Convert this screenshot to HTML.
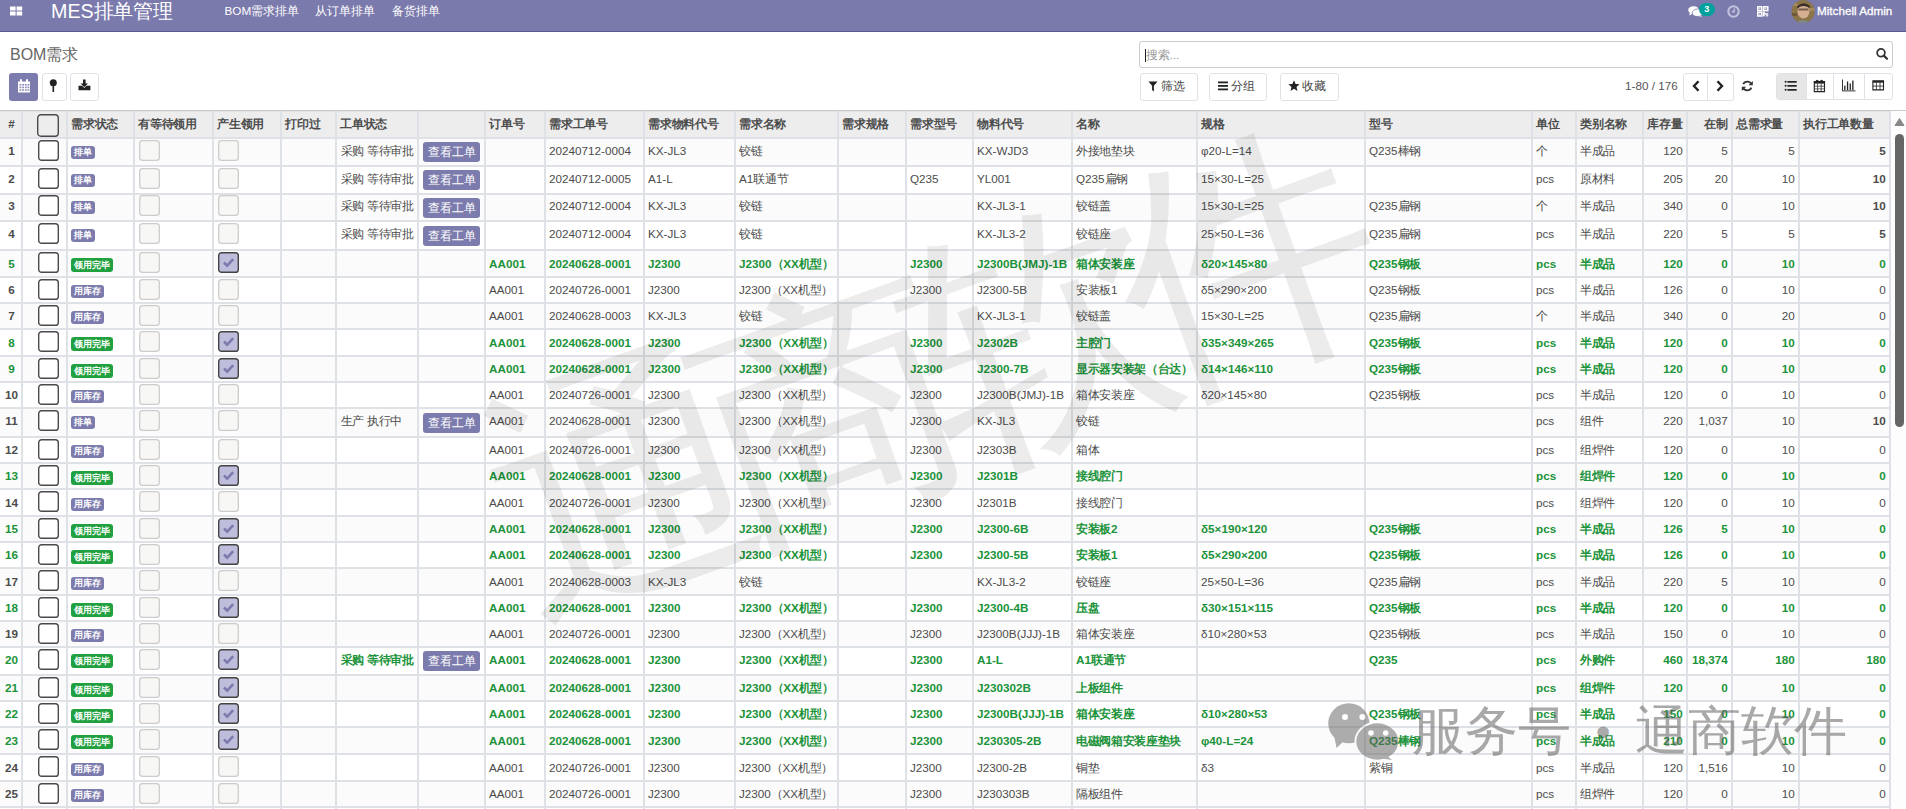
<!DOCTYPE html><html><head><meta charset="utf-8"><style>
*{box-sizing:border-box;margin:0;padding:0}
html,body{width:1906px;height:809px;overflow:hidden;background:#fff}
body{font-family:"Liberation Sans",sans-serif;color:#4c4c4c;position:relative}
.a{position:absolute}
.c{letter-spacing:-0.33px}
.nav{left:0;top:0;width:1906px;height:32px;background:#7b7aac;border-bottom:1px solid #5b5894}
.t{position:absolute;white-space:nowrap;font-size:11.7px;line-height:14px}
.hd{font-weight:bold;color:#4c4c4c}
.g{color:#1b933a;font-weight:bold}
.bd{font-weight:bold}
.vs{position:absolute;width:2px;background:#dee2e6}
.hs{position:absolute;height:2px;background:#dee2e6;left:0;width:1891px}
.cb{position:absolute;width:21px;height:21px}
.badge{position:absolute;height:13px;border-radius:3px;color:#fff;font-size:9px;line-height:13px;padding:0 3.2px;white-space:nowrap;font-weight:bold}
.btnv{position:absolute;height:20px;width:57px;border-radius:3px;background:#7c7bad;color:#fff;font-size:12px;line-height:20px;text-align:center;white-space:nowrap}
.obtn{position:absolute;border:1px solid #dee2e6;border-radius:3px;background:#fff}
</style></head><body>

<div class="a nav"></div>
<div class="a" style="left:0;top:110px;width:1906px;height:1px;background:#c9c9c9"></div>
<div class="a" style="left:0;top:111px;width:1889px;height:26px;background:#ededed"></div>
<div class="a" style="left:0;top:111px;width:1889px;height:1px;background:#e0e2e6"></div>
<div class="a" style="left:0;top:139px;width:1889px;height:26px;background:#fbfbfb"></div>
<div class="a" style="left:0;top:167px;width:1889px;height:26px;background:#fff"></div>
<div class="a" style="left:0;top:195px;width:1889px;height:25px;background:#fbfbfb"></div>
<div class="a" style="left:0;top:222px;width:1889px;height:27px;background:#fff"></div>
<div class="a" style="left:0;top:251px;width:1889px;height:25px;background:#fbfbfb"></div>
<div class="a" style="left:0;top:278px;width:1889px;height:24px;background:#fff"></div>
<div class="a" style="left:0;top:304px;width:1889px;height:24px;background:#fbfbfb"></div>
<div class="a" style="left:0;top:330px;width:1889px;height:25px;background:#fff"></div>
<div class="a" style="left:0;top:357px;width:1889px;height:24px;background:#fbfbfb"></div>
<div class="a" style="left:0;top:383px;width:1889px;height:24px;background:#fff"></div>
<div class="a" style="left:0;top:409px;width:1889px;height:27px;background:#fbfbfb"></div>
<div class="a" style="left:0;top:438px;width:1889px;height:24px;background:#fff"></div>
<div class="a" style="left:0;top:464px;width:1889px;height:24px;background:#fbfbfb"></div>
<div class="a" style="left:0;top:490px;width:1889px;height:25px;background:#fff"></div>
<div class="a" style="left:0;top:517px;width:1889px;height:24px;background:#fbfbfb"></div>
<div class="a" style="left:0;top:543px;width:1889px;height:24px;background:#fff"></div>
<div class="a" style="left:0;top:569px;width:1889px;height:25px;background:#fbfbfb"></div>
<div class="a" style="left:0;top:596px;width:1889px;height:24px;background:#fff"></div>
<div class="a" style="left:0;top:622px;width:1889px;height:24px;background:#fbfbfb"></div>
<div class="a" style="left:0;top:648px;width:1889px;height:26px;background:#fff"></div>
<div class="a" style="left:0;top:676px;width:1889px;height:24px;background:#fbfbfb"></div>
<div class="a" style="left:0;top:702px;width:1889px;height:24px;background:#fff"></div>
<div class="a" style="left:0;top:728px;width:1889px;height:25px;background:#fbfbfb"></div>
<div class="a" style="left:0;top:755px;width:1889px;height:25px;background:#fff"></div>
<div class="a" style="left:0;top:782px;width:1889px;height:24px;background:#fbfbfb"></div>
<div class="hs" style="top:137px"></div>
<div class="hs" style="top:165px"></div>
<div class="hs" style="top:193px"></div>
<div class="hs" style="top:220px"></div>
<div class="hs" style="top:249px"></div>
<div class="hs" style="top:276px"></div>
<div class="hs" style="top:302px"></div>
<div class="hs" style="top:328px"></div>
<div class="hs" style="top:355px"></div>
<div class="hs" style="top:381px"></div>
<div class="hs" style="top:407px"></div>
<div class="hs" style="top:436px"></div>
<div class="hs" style="top:462px"></div>
<div class="hs" style="top:488px"></div>
<div class="hs" style="top:515px"></div>
<div class="hs" style="top:541px"></div>
<div class="hs" style="top:567px"></div>
<div class="hs" style="top:594px"></div>
<div class="hs" style="top:620px"></div>
<div class="hs" style="top:646px"></div>
<div class="hs" style="top:674px"></div>
<div class="hs" style="top:700px"></div>
<div class="hs" style="top:726px"></div>
<div class="hs" style="top:753px"></div>
<div class="hs" style="top:780px"></div>
<div class="hs" style="top:806px"></div>
<div class="vs" style="left:21px;top:111px;height:698px"></div>
<div class="vs" style="left:66px;top:111px;height:698px"></div>
<div class="vs" style="left:133px;top:111px;height:698px"></div>
<div class="vs" style="left:212px;top:111px;height:698px"></div>
<div class="vs" style="left:280px;top:111px;height:698px"></div>
<div class="vs" style="left:335px;top:111px;height:698px"></div>
<div class="vs" style="left:417px;top:111px;height:698px"></div>
<div class="vs" style="left:484px;top:111px;height:698px"></div>
<div class="vs" style="left:544px;top:111px;height:698px"></div>
<div class="vs" style="left:643px;top:111px;height:698px"></div>
<div class="vs" style="left:734px;top:111px;height:698px"></div>
<div class="vs" style="left:837px;top:111px;height:698px"></div>
<div class="vs" style="left:905px;top:111px;height:698px"></div>
<div class="vs" style="left:972px;top:111px;height:698px"></div>
<div class="vs" style="left:1071px;top:111px;height:698px"></div>
<div class="vs" style="left:1196px;top:111px;height:698px"></div>
<div class="vs" style="left:1364px;top:111px;height:698px"></div>
<div class="vs" style="left:1531px;top:111px;height:698px"></div>
<div class="vs" style="left:1575px;top:111px;height:698px"></div>
<div class="vs" style="left:1642px;top:111px;height:698px"></div>
<div class="vs" style="left:1686px;top:111px;height:698px"></div>
<div class="vs" style="left:1731px;top:111px;height:698px"></div>
<div class="vs" style="left:1798px;top:111px;height:698px"></div>
<div class="vs" style="left:1889px;top:111px;height:698px"></div>
<div class="t hd" style="left:0;width:23px;text-align:center;top:116.94px">#</div>
<div class="t hd" style="left:71.3px;top:116.94px"><span class="c">需求状态</span></div>
<div class="t hd" style="left:138.3px;top:116.94px"><span class="c">有等待领用</span></div>
<div class="t hd" style="left:217.3px;top:116.94px"><span class="c">产生领用</span></div>
<div class="t hd" style="left:285.3px;top:116.94px"><span class="c">打印过</span></div>
<div class="t hd" style="left:340.3px;top:116.94px"><span class="c">工单状态</span></div>
<div class="t hd" style="left:489.3px;top:116.94px"><span class="c">订单号</span></div>
<div class="t hd" style="left:549.3px;top:116.94px"><span class="c">需求工单号</span></div>
<div class="t hd" style="left:648.3px;top:116.94px"><span class="c">需求物料代号</span></div>
<div class="t hd" style="left:739.3px;top:116.94px"><span class="c">需求名称</span></div>
<div class="t hd" style="left:842.3px;top:116.94px"><span class="c">需求规格</span></div>
<div class="t hd" style="left:910.3px;top:116.94px"><span class="c">需求型号</span></div>
<div class="t hd" style="left:977.3px;top:116.94px"><span class="c">物料代号</span></div>
<div class="t hd" style="left:1076.3px;top:116.94px"><span class="c">名称</span></div>
<div class="t hd" style="left:1201.3px;top:116.94px"><span class="c">规格</span></div>
<div class="t hd" style="left:1369.3px;top:116.94px"><span class="c">型号</span></div>
<div class="t hd" style="left:1536.3px;top:116.94px"><span class="c">单位</span></div>
<div class="t hd" style="left:1580.3px;top:116.94px"><span class="c">类别名称</span></div>
<div class="t hd" style="left:1647.3px;top:116.94px"><span class="c">库存量</span></div>
<div class="t hd" style="right:178.5px;top:116.94px"><span class="c">在制</span></div>
<div class="t hd" style="left:1736.3px;top:116.94px"><span class="c">总需求量</span></div>
<div class="t hd" style="left:1803.3px;top:116.94px"><span class="c">执行工单数量</span></div>
<svg class="a" style="left:37px;top:113.5px" width="22" height="23" viewBox="0 0 22 23"><rect x="0.7" y="0.7" width="20.6" height="21.6" rx="3.2" fill="#ededed" stroke="#4a4a4a" stroke-width="1.4"/></svg>
<div class="t bd" style="left:0;width:23px;text-align:center;top:143.84px;">1</div>
<svg class="cb" style="left:38px;top:139.50px" width="21" height="21" viewBox="0 0 21 21"><rect x="0.7" y="0.7" width="19.6" height="19.6" rx="2.9" fill="#fff" stroke="#4a4a4a" stroke-width="1.4"/></svg>
<div class="badge" style="left:71px;top:145.90px;height:13px;line-height:13px;background:#7c7bad">排单</div>
<svg class="cb" style="left:139px;top:139.50px" width="21" height="21" viewBox="0 0 21 21"><rect x="0.7" y="0.7" width="19.6" height="19.6" rx="2.9" fill="#f7f7f5" stroke="#cccccc" stroke-width="1.3"/></svg>
<svg class="cb" style="left:218px;top:139.50px" width="21" height="21" viewBox="0 0 21 21"><rect x="0.7" y="0.7" width="19.6" height="19.6" rx="2.9" fill="#f7f7f5" stroke="#cccccc" stroke-width="1.3"/></svg>
<div class="t" style="left:340.5px;top:143.84px"><span class="c">采购</span> <span class="c">等待审批</span></div>
<div class="btnv" style="left:423px;top:142.00px">查看工单</div>
<div class="t" style="left:549px;top:143.84px">20240712-0004</div>
<div class="t" style="left:648px;top:143.84px">KX-JL3</div>
<div class="t" style="left:739px;top:143.84px"><span class="c">铰链</span></div>
<div class="t" style="left:977px;top:143.84px">KX-WJD3</div>
<div class="t" style="left:1076px;top:143.84px"><span class="c">外接地垫块</span></div>
<div class="t" style="left:1201px;top:143.84px">φ20-L=14</div>
<div class="t" style="left:1369px;top:143.84px">Q235<span class="c">棒钢</span></div>
<div class="t" style="left:1536px;top:143.84px"><span class="c">个</span></div>
<div class="t" style="left:1580px;top:143.84px"><span class="c">半成品</span></div>
<div class="t" style="right:223.2px;top:143.84px">120</div>
<div class="t" style="right:178.2px;top:143.84px">5</div>
<div class="t" style="right:111.2px;top:143.84px">5</div>
<div class="t bd" style="right:20.2px;top:143.84px">5</div>
<div class="t bd" style="left:0;width:23px;text-align:center;top:171.84px;">2</div>
<svg class="cb" style="left:38px;top:167.50px" width="21" height="21" viewBox="0 0 21 21"><rect x="0.7" y="0.7" width="19.6" height="19.6" rx="2.9" fill="#fff" stroke="#4a4a4a" stroke-width="1.4"/></svg>
<div class="badge" style="left:71px;top:173.90px;height:13px;line-height:13px;background:#7c7bad">排单</div>
<svg class="cb" style="left:139px;top:167.50px" width="21" height="21" viewBox="0 0 21 21"><rect x="0.7" y="0.7" width="19.6" height="19.6" rx="2.9" fill="#f7f7f5" stroke="#cccccc" stroke-width="1.3"/></svg>
<svg class="cb" style="left:218px;top:167.50px" width="21" height="21" viewBox="0 0 21 21"><rect x="0.7" y="0.7" width="19.6" height="19.6" rx="2.9" fill="#f7f7f5" stroke="#cccccc" stroke-width="1.3"/></svg>
<div class="t" style="left:340.5px;top:171.84px"><span class="c">采购</span> <span class="c">等待审批</span></div>
<div class="btnv" style="left:423px;top:170.00px">查看工单</div>
<div class="t" style="left:549px;top:171.84px">20240712-0005</div>
<div class="t" style="left:648px;top:171.84px">A1-L</div>
<div class="t" style="left:739px;top:171.84px">A1<span class="c">联通节</span></div>
<div class="t" style="left:910px;top:171.84px">Q235</div>
<div class="t" style="left:977px;top:171.84px">YL001</div>
<div class="t" style="left:1076px;top:171.84px">Q235<span class="c">扁钢</span></div>
<div class="t" style="left:1201px;top:171.84px">15×30-L=25</div>
<div class="t" style="left:1536px;top:171.84px">pcs</div>
<div class="t" style="left:1580px;top:171.84px"><span class="c">原材料</span></div>
<div class="t" style="right:223.2px;top:171.84px">205</div>
<div class="t" style="right:178.2px;top:171.84px">20</div>
<div class="t" style="right:111.2px;top:171.84px">10</div>
<div class="t bd" style="right:20.2px;top:171.84px">10</div>
<div class="t bd" style="left:0;width:23px;text-align:center;top:199.34px;">3</div>
<svg class="cb" style="left:38px;top:195.00px" width="21" height="21" viewBox="0 0 21 21"><rect x="0.7" y="0.7" width="19.6" height="19.6" rx="2.9" fill="#fff" stroke="#4a4a4a" stroke-width="1.4"/></svg>
<div class="badge" style="left:71px;top:201.40px;height:13px;line-height:13px;background:#7c7bad">排单</div>
<svg class="cb" style="left:139px;top:195.00px" width="21" height="21" viewBox="0 0 21 21"><rect x="0.7" y="0.7" width="19.6" height="19.6" rx="2.9" fill="#f7f7f5" stroke="#cccccc" stroke-width="1.3"/></svg>
<svg class="cb" style="left:218px;top:195.00px" width="21" height="21" viewBox="0 0 21 21"><rect x="0.7" y="0.7" width="19.6" height="19.6" rx="2.9" fill="#f7f7f5" stroke="#cccccc" stroke-width="1.3"/></svg>
<div class="t" style="left:340.5px;top:199.34px"><span class="c">采购</span> <span class="c">等待审批</span></div>
<div class="btnv" style="left:423px;top:197.50px">查看工单</div>
<div class="t" style="left:549px;top:199.34px">20240712-0004</div>
<div class="t" style="left:648px;top:199.34px">KX-JL3</div>
<div class="t" style="left:739px;top:199.34px"><span class="c">铰链</span></div>
<div class="t" style="left:977px;top:199.34px">KX-JL3-1</div>
<div class="t" style="left:1076px;top:199.34px"><span class="c">铰链盖</span></div>
<div class="t" style="left:1201px;top:199.34px">15×30-L=25</div>
<div class="t" style="left:1369px;top:199.34px">Q235<span class="c">扁钢</span></div>
<div class="t" style="left:1536px;top:199.34px"><span class="c">个</span></div>
<div class="t" style="left:1580px;top:199.34px"><span class="c">半成品</span></div>
<div class="t" style="right:223.2px;top:199.34px">340</div>
<div class="t" style="right:178.2px;top:199.34px">0</div>
<div class="t" style="right:111.2px;top:199.34px">10</div>
<div class="t bd" style="right:20.2px;top:199.34px">10</div>
<div class="t bd" style="left:0;width:23px;text-align:center;top:227.34px;">4</div>
<svg class="cb" style="left:38px;top:223.00px" width="21" height="21" viewBox="0 0 21 21"><rect x="0.7" y="0.7" width="19.6" height="19.6" rx="2.9" fill="#fff" stroke="#4a4a4a" stroke-width="1.4"/></svg>
<div class="badge" style="left:71px;top:229.40px;height:13px;line-height:13px;background:#7c7bad">排单</div>
<svg class="cb" style="left:139px;top:223.00px" width="21" height="21" viewBox="0 0 21 21"><rect x="0.7" y="0.7" width="19.6" height="19.6" rx="2.9" fill="#f7f7f5" stroke="#cccccc" stroke-width="1.3"/></svg>
<svg class="cb" style="left:218px;top:223.00px" width="21" height="21" viewBox="0 0 21 21"><rect x="0.7" y="0.7" width="19.6" height="19.6" rx="2.9" fill="#f7f7f5" stroke="#cccccc" stroke-width="1.3"/></svg>
<div class="t" style="left:340.5px;top:227.34px"><span class="c">采购</span> <span class="c">等待审批</span></div>
<div class="btnv" style="left:423px;top:225.50px">查看工单</div>
<div class="t" style="left:549px;top:227.34px">20240712-0004</div>
<div class="t" style="left:648px;top:227.34px">KX-JL3</div>
<div class="t" style="left:739px;top:227.34px"><span class="c">铰链</span></div>
<div class="t" style="left:977px;top:227.34px">KX-JL3-2</div>
<div class="t" style="left:1076px;top:227.34px"><span class="c">铰链座</span></div>
<div class="t" style="left:1201px;top:227.34px">25×50-L=36</div>
<div class="t" style="left:1369px;top:227.34px">Q235<span class="c">扁钢</span></div>
<div class="t" style="left:1536px;top:227.34px">pcs</div>
<div class="t" style="left:1580px;top:227.34px"><span class="c">半成品</span></div>
<div class="t" style="right:223.2px;top:227.34px">220</div>
<div class="t" style="right:178.2px;top:227.34px">5</div>
<div class="t" style="right:111.2px;top:227.34px">5</div>
<div class="t bd" style="right:20.2px;top:227.34px">5</div>
<div class="t bd" style="left:0;width:23px;text-align:center;top:256.64px;color:#1b933a;">5</div>
<svg class="cb" style="left:38px;top:252.30px" width="21" height="21" viewBox="0 0 21 21"><rect x="0.7" y="0.7" width="19.6" height="19.6" rx="2.9" fill="#fff" stroke="#4a4a4a" stroke-width="1.4"/></svg>
<div class="badge" style="left:71px;top:258.00px;height:14px;line-height:14px;background:#21a03f">领用完毕</div>
<svg class="cb" style="left:139px;top:252.30px" width="21" height="21" viewBox="0 0 21 21"><rect x="0.7" y="0.7" width="19.6" height="19.6" rx="2.9" fill="#f7f7f5" stroke="#cccccc" stroke-width="1.3"/></svg>
<svg class="cb" style="left:218px;top:252.30px" width="21" height="21" viewBox="0 0 21 21"><rect x="0.7" y="0.7" width="19.6" height="19.6" rx="2.9" fill="#bebddb" stroke="#444" stroke-width="1.4"/><path d="M6 10.5 L9.2 13.7 L15.2 7.2" stroke="#7c7bad" stroke-width="2.6" fill="none"/></svg>
<div class="t g" style="left:489px;top:256.64px">AA001</div>
<div class="t g" style="left:549px;top:256.64px">20240628-0001</div>
<div class="t g" style="left:648px;top:256.64px">J2300</div>
<div class="t g" style="left:739px;top:256.64px">J2300<span class="c">（</span>XX<span class="c">机型）</span></div>
<div class="t g" style="left:910px;top:256.64px">J2300</div>
<div class="t g" style="left:977px;top:256.64px">J2300B(JMJ)-1B</div>
<div class="t g" style="left:1076px;top:256.64px"><span class="c">箱体安装座</span></div>
<div class="t g" style="left:1201px;top:256.64px">δ20×145×80</div>
<div class="t g" style="left:1369px;top:256.64px">Q235<span class="c">钢板</span></div>
<div class="t g" style="left:1536px;top:256.64px">pcs</div>
<div class="t g" style="left:1580px;top:256.64px"><span class="c">半成品</span></div>
<div class="t g" style="right:223.2px;top:256.64px">120</div>
<div class="t g" style="right:178.2px;top:256.64px">0</div>
<div class="t g" style="right:111.2px;top:256.64px">10</div>
<div class="t g" style="right:20.2px;top:256.64px">0</div>
<div class="t bd" style="left:0;width:23px;text-align:center;top:283.14px;">6</div>
<svg class="cb" style="left:38px;top:278.80px" width="21" height="21" viewBox="0 0 21 21"><rect x="0.7" y="0.7" width="19.6" height="19.6" rx="2.9" fill="#fff" stroke="#4a4a4a" stroke-width="1.4"/></svg>
<div class="badge" style="left:71px;top:285.00px;height:13px;line-height:13px;background:#7c7bad">用库存</div>
<svg class="cb" style="left:139px;top:278.80px" width="21" height="21" viewBox="0 0 21 21"><rect x="0.7" y="0.7" width="19.6" height="19.6" rx="2.9" fill="#f7f7f5" stroke="#cccccc" stroke-width="1.3"/></svg>
<svg class="cb" style="left:218px;top:278.80px" width="21" height="21" viewBox="0 0 21 21"><rect x="0.7" y="0.7" width="19.6" height="19.6" rx="2.9" fill="#f7f7f5" stroke="#cccccc" stroke-width="1.3"/></svg>
<div class="t" style="left:489px;top:283.14px">AA001</div>
<div class="t" style="left:549px;top:283.14px">20240726-0001</div>
<div class="t" style="left:648px;top:283.14px">J2300</div>
<div class="t" style="left:739px;top:283.14px">J2300<span class="c">（</span>XX<span class="c">机型）</span></div>
<div class="t" style="left:910px;top:283.14px">J2300</div>
<div class="t" style="left:977px;top:283.14px">J2300-5B</div>
<div class="t" style="left:1076px;top:283.14px"><span class="c">安装板</span>1</div>
<div class="t" style="left:1201px;top:283.14px">δ5×290×200</div>
<div class="t" style="left:1369px;top:283.14px">Q235<span class="c">钢板</span></div>
<div class="t" style="left:1536px;top:283.14px">pcs</div>
<div class="t" style="left:1580px;top:283.14px"><span class="c">半成品</span></div>
<div class="t" style="right:223.2px;top:283.14px">126</div>
<div class="t" style="right:178.2px;top:283.14px">0</div>
<div class="t" style="right:111.2px;top:283.14px">10</div>
<div class="t" style="right:20.2px;top:283.14px">0</div>
<div class="t bd" style="left:0;width:23px;text-align:center;top:309.14px;">7</div>
<svg class="cb" style="left:38px;top:304.80px" width="21" height="21" viewBox="0 0 21 21"><rect x="0.7" y="0.7" width="19.6" height="19.6" rx="2.9" fill="#fff" stroke="#4a4a4a" stroke-width="1.4"/></svg>
<div class="badge" style="left:71px;top:311.00px;height:13px;line-height:13px;background:#7c7bad">用库存</div>
<svg class="cb" style="left:139px;top:304.80px" width="21" height="21" viewBox="0 0 21 21"><rect x="0.7" y="0.7" width="19.6" height="19.6" rx="2.9" fill="#f7f7f5" stroke="#cccccc" stroke-width="1.3"/></svg>
<svg class="cb" style="left:218px;top:304.80px" width="21" height="21" viewBox="0 0 21 21"><rect x="0.7" y="0.7" width="19.6" height="19.6" rx="2.9" fill="#f7f7f5" stroke="#cccccc" stroke-width="1.3"/></svg>
<div class="t" style="left:489px;top:309.14px">AA001</div>
<div class="t" style="left:549px;top:309.14px">20240628-0003</div>
<div class="t" style="left:648px;top:309.14px">KX-JL3</div>
<div class="t" style="left:739px;top:309.14px"><span class="c">铰链</span></div>
<div class="t" style="left:977px;top:309.14px">KX-JL3-1</div>
<div class="t" style="left:1076px;top:309.14px"><span class="c">铰链盖</span></div>
<div class="t" style="left:1201px;top:309.14px">15×30-L=25</div>
<div class="t" style="left:1369px;top:309.14px">Q235<span class="c">扁钢</span></div>
<div class="t" style="left:1536px;top:309.14px"><span class="c">个</span></div>
<div class="t" style="left:1580px;top:309.14px"><span class="c">半成品</span></div>
<div class="t" style="right:223.2px;top:309.14px">340</div>
<div class="t" style="right:178.2px;top:309.14px">0</div>
<div class="t" style="right:111.2px;top:309.14px">20</div>
<div class="t" style="right:20.2px;top:309.14px">0</div>
<div class="t bd" style="left:0;width:23px;text-align:center;top:335.64px;color:#1b933a;">8</div>
<svg class="cb" style="left:38px;top:331.30px" width="21" height="21" viewBox="0 0 21 21"><rect x="0.7" y="0.7" width="19.6" height="19.6" rx="2.9" fill="#fff" stroke="#4a4a4a" stroke-width="1.4"/></svg>
<div class="badge" style="left:71px;top:337.00px;height:14px;line-height:14px;background:#21a03f">领用完毕</div>
<svg class="cb" style="left:139px;top:331.30px" width="21" height="21" viewBox="0 0 21 21"><rect x="0.7" y="0.7" width="19.6" height="19.6" rx="2.9" fill="#f7f7f5" stroke="#cccccc" stroke-width="1.3"/></svg>
<svg class="cb" style="left:218px;top:331.30px" width="21" height="21" viewBox="0 0 21 21"><rect x="0.7" y="0.7" width="19.6" height="19.6" rx="2.9" fill="#bebddb" stroke="#444" stroke-width="1.4"/><path d="M6 10.5 L9.2 13.7 L15.2 7.2" stroke="#7c7bad" stroke-width="2.6" fill="none"/></svg>
<div class="t g" style="left:489px;top:335.64px">AA001</div>
<div class="t g" style="left:549px;top:335.64px">20240628-0001</div>
<div class="t g" style="left:648px;top:335.64px">J2300</div>
<div class="t g" style="left:739px;top:335.64px">J2300<span class="c">（</span>XX<span class="c">机型）</span></div>
<div class="t g" style="left:910px;top:335.64px">J2300</div>
<div class="t g" style="left:977px;top:335.64px">J2302B</div>
<div class="t g" style="left:1076px;top:335.64px"><span class="c">主腔门</span></div>
<div class="t g" style="left:1201px;top:335.64px">δ35×349×265</div>
<div class="t g" style="left:1369px;top:335.64px">Q235<span class="c">钢板</span></div>
<div class="t g" style="left:1536px;top:335.64px">pcs</div>
<div class="t g" style="left:1580px;top:335.64px"><span class="c">半成品</span></div>
<div class="t g" style="right:223.2px;top:335.64px">120</div>
<div class="t g" style="right:178.2px;top:335.64px">0</div>
<div class="t g" style="right:111.2px;top:335.64px">10</div>
<div class="t g" style="right:20.2px;top:335.64px">0</div>
<div class="t bd" style="left:0;width:23px;text-align:center;top:362.14px;color:#1b933a;">9</div>
<svg class="cb" style="left:38px;top:357.80px" width="21" height="21" viewBox="0 0 21 21"><rect x="0.7" y="0.7" width="19.6" height="19.6" rx="2.9" fill="#fff" stroke="#4a4a4a" stroke-width="1.4"/></svg>
<div class="badge" style="left:71px;top:363.50px;height:14px;line-height:14px;background:#21a03f">领用完毕</div>
<svg class="cb" style="left:139px;top:357.80px" width="21" height="21" viewBox="0 0 21 21"><rect x="0.7" y="0.7" width="19.6" height="19.6" rx="2.9" fill="#f7f7f5" stroke="#cccccc" stroke-width="1.3"/></svg>
<svg class="cb" style="left:218px;top:357.80px" width="21" height="21" viewBox="0 0 21 21"><rect x="0.7" y="0.7" width="19.6" height="19.6" rx="2.9" fill="#bebddb" stroke="#444" stroke-width="1.4"/><path d="M6 10.5 L9.2 13.7 L15.2 7.2" stroke="#7c7bad" stroke-width="2.6" fill="none"/></svg>
<div class="t g" style="left:489px;top:362.14px">AA001</div>
<div class="t g" style="left:549px;top:362.14px">20240628-0001</div>
<div class="t g" style="left:648px;top:362.14px">J2300</div>
<div class="t g" style="left:739px;top:362.14px">J2300<span class="c">（</span>XX<span class="c">机型）</span></div>
<div class="t g" style="left:910px;top:362.14px">J2300</div>
<div class="t g" style="left:977px;top:362.14px">J2300-7B</div>
<div class="t g" style="left:1076px;top:362.14px"><span class="c">显示器安装架（台达）</span></div>
<div class="t g" style="left:1201px;top:362.14px">δ14×146×110</div>
<div class="t g" style="left:1369px;top:362.14px">Q235<span class="c">钢板</span></div>
<div class="t g" style="left:1536px;top:362.14px">pcs</div>
<div class="t g" style="left:1580px;top:362.14px"><span class="c">半成品</span></div>
<div class="t g" style="right:223.2px;top:362.14px">120</div>
<div class="t g" style="right:178.2px;top:362.14px">0</div>
<div class="t g" style="right:111.2px;top:362.14px">10</div>
<div class="t g" style="right:20.2px;top:362.14px">0</div>
<div class="t bd" style="left:0;width:23px;text-align:center;top:388.14px;">10</div>
<svg class="cb" style="left:38px;top:383.80px" width="21" height="21" viewBox="0 0 21 21"><rect x="0.7" y="0.7" width="19.6" height="19.6" rx="2.9" fill="#fff" stroke="#4a4a4a" stroke-width="1.4"/></svg>
<div class="badge" style="left:71px;top:390.00px;height:13px;line-height:13px;background:#7c7bad">用库存</div>
<svg class="cb" style="left:139px;top:383.80px" width="21" height="21" viewBox="0 0 21 21"><rect x="0.7" y="0.7" width="19.6" height="19.6" rx="2.9" fill="#f7f7f5" stroke="#cccccc" stroke-width="1.3"/></svg>
<svg class="cb" style="left:218px;top:383.80px" width="21" height="21" viewBox="0 0 21 21"><rect x="0.7" y="0.7" width="19.6" height="19.6" rx="2.9" fill="#f7f7f5" stroke="#cccccc" stroke-width="1.3"/></svg>
<div class="t" style="left:489px;top:388.14px">AA001</div>
<div class="t" style="left:549px;top:388.14px">20240726-0001</div>
<div class="t" style="left:648px;top:388.14px">J2300</div>
<div class="t" style="left:739px;top:388.14px">J2300<span class="c">（</span>XX<span class="c">机型）</span></div>
<div class="t" style="left:910px;top:388.14px">J2300</div>
<div class="t" style="left:977px;top:388.14px">J2300B(JMJ)-1B</div>
<div class="t" style="left:1076px;top:388.14px"><span class="c">箱体安装座</span></div>
<div class="t" style="left:1201px;top:388.14px">δ20×145×80</div>
<div class="t" style="left:1369px;top:388.14px">Q235<span class="c">钢板</span></div>
<div class="t" style="left:1536px;top:388.14px">pcs</div>
<div class="t" style="left:1580px;top:388.14px"><span class="c">半成品</span></div>
<div class="t" style="right:223.2px;top:388.14px">120</div>
<div class="t" style="right:178.2px;top:388.14px">0</div>
<div class="t" style="right:111.2px;top:388.14px">10</div>
<div class="t" style="right:20.2px;top:388.14px">0</div>
<div class="t bd" style="left:0;width:23px;text-align:center;top:414.34px;">11</div>
<svg class="cb" style="left:38px;top:410.00px" width="21" height="21" viewBox="0 0 21 21"><rect x="0.7" y="0.7" width="19.6" height="19.6" rx="2.9" fill="#fff" stroke="#4a4a4a" stroke-width="1.4"/></svg>
<div class="badge" style="left:71px;top:416.40px;height:13px;line-height:13px;background:#7c7bad">排单</div>
<svg class="cb" style="left:139px;top:410.00px" width="21" height="21" viewBox="0 0 21 21"><rect x="0.7" y="0.7" width="19.6" height="19.6" rx="2.9" fill="#f7f7f5" stroke="#cccccc" stroke-width="1.3"/></svg>
<svg class="cb" style="left:218px;top:410.00px" width="21" height="21" viewBox="0 0 21 21"><rect x="0.7" y="0.7" width="19.6" height="19.6" rx="2.9" fill="#f7f7f5" stroke="#cccccc" stroke-width="1.3"/></svg>
<div class="t" style="left:340.5px;top:414.34px"><span class="c">生产</span> <span class="c">执行中</span></div>
<div class="btnv" style="left:423px;top:412.50px">查看工单</div>
<div class="t" style="left:489px;top:414.34px">AA001</div>
<div class="t" style="left:549px;top:414.34px">20240628-0001</div>
<div class="t" style="left:648px;top:414.34px">J2300</div>
<div class="t" style="left:739px;top:414.34px">J2300<span class="c">（</span>XX<span class="c">机型）</span></div>
<div class="t" style="left:910px;top:414.34px">J2300</div>
<div class="t" style="left:977px;top:414.34px">KX-JL3</div>
<div class="t" style="left:1076px;top:414.34px"><span class="c">铰链</span></div>
<div class="t" style="left:1536px;top:414.34px">pcs</div>
<div class="t" style="left:1580px;top:414.34px"><span class="c">组件</span></div>
<div class="t" style="right:223.2px;top:414.34px">220</div>
<div class="t" style="right:178.2px;top:414.34px">1,037</div>
<div class="t" style="right:111.2px;top:414.34px">10</div>
<div class="t bd" style="right:20.2px;top:414.34px">10</div>
<div class="t bd" style="left:0;width:23px;text-align:center;top:443.14px;">12</div>
<svg class="cb" style="left:38px;top:438.80px" width="21" height="21" viewBox="0 0 21 21"><rect x="0.7" y="0.7" width="19.6" height="19.6" rx="2.9" fill="#fff" stroke="#4a4a4a" stroke-width="1.4"/></svg>
<div class="badge" style="left:71px;top:445.00px;height:13px;line-height:13px;background:#7c7bad">用库存</div>
<svg class="cb" style="left:139px;top:438.80px" width="21" height="21" viewBox="0 0 21 21"><rect x="0.7" y="0.7" width="19.6" height="19.6" rx="2.9" fill="#f7f7f5" stroke="#cccccc" stroke-width="1.3"/></svg>
<svg class="cb" style="left:218px;top:438.80px" width="21" height="21" viewBox="0 0 21 21"><rect x="0.7" y="0.7" width="19.6" height="19.6" rx="2.9" fill="#f7f7f5" stroke="#cccccc" stroke-width="1.3"/></svg>
<div class="t" style="left:489px;top:443.14px">AA001</div>
<div class="t" style="left:549px;top:443.14px">20240726-0001</div>
<div class="t" style="left:648px;top:443.14px">J2300</div>
<div class="t" style="left:739px;top:443.14px">J2300<span class="c">（</span>XX<span class="c">机型）</span></div>
<div class="t" style="left:910px;top:443.14px">J2300</div>
<div class="t" style="left:977px;top:443.14px">J2303B</div>
<div class="t" style="left:1076px;top:443.14px"><span class="c">箱体</span></div>
<div class="t" style="left:1536px;top:443.14px">pcs</div>
<div class="t" style="left:1580px;top:443.14px"><span class="c">组焊件</span></div>
<div class="t" style="right:223.2px;top:443.14px">120</div>
<div class="t" style="right:178.2px;top:443.14px">0</div>
<div class="t" style="right:111.2px;top:443.14px">10</div>
<div class="t" style="right:20.2px;top:443.14px">0</div>
<div class="t bd" style="left:0;width:23px;text-align:center;top:469.14px;color:#1b933a;">13</div>
<svg class="cb" style="left:38px;top:464.80px" width="21" height="21" viewBox="0 0 21 21"><rect x="0.7" y="0.7" width="19.6" height="19.6" rx="2.9" fill="#fff" stroke="#4a4a4a" stroke-width="1.4"/></svg>
<div class="badge" style="left:71px;top:470.50px;height:14px;line-height:14px;background:#21a03f">领用完毕</div>
<svg class="cb" style="left:139px;top:464.80px" width="21" height="21" viewBox="0 0 21 21"><rect x="0.7" y="0.7" width="19.6" height="19.6" rx="2.9" fill="#f7f7f5" stroke="#cccccc" stroke-width="1.3"/></svg>
<svg class="cb" style="left:218px;top:464.80px" width="21" height="21" viewBox="0 0 21 21"><rect x="0.7" y="0.7" width="19.6" height="19.6" rx="2.9" fill="#bebddb" stroke="#444" stroke-width="1.4"/><path d="M6 10.5 L9.2 13.7 L15.2 7.2" stroke="#7c7bad" stroke-width="2.6" fill="none"/></svg>
<div class="t g" style="left:489px;top:469.14px">AA001</div>
<div class="t g" style="left:549px;top:469.14px">20240628-0001</div>
<div class="t g" style="left:648px;top:469.14px">J2300</div>
<div class="t g" style="left:739px;top:469.14px">J2300<span class="c">（</span>XX<span class="c">机型）</span></div>
<div class="t g" style="left:910px;top:469.14px">J2300</div>
<div class="t g" style="left:977px;top:469.14px">J2301B</div>
<div class="t g" style="left:1076px;top:469.14px"><span class="c">接线腔门</span></div>
<div class="t g" style="left:1536px;top:469.14px">pcs</div>
<div class="t g" style="left:1580px;top:469.14px"><span class="c">组焊件</span></div>
<div class="t g" style="right:223.2px;top:469.14px">120</div>
<div class="t g" style="right:178.2px;top:469.14px">0</div>
<div class="t g" style="right:111.2px;top:469.14px">10</div>
<div class="t g" style="right:20.2px;top:469.14px">0</div>
<div class="t bd" style="left:0;width:23px;text-align:center;top:495.64px;">14</div>
<svg class="cb" style="left:38px;top:491.30px" width="21" height="21" viewBox="0 0 21 21"><rect x="0.7" y="0.7" width="19.6" height="19.6" rx="2.9" fill="#fff" stroke="#4a4a4a" stroke-width="1.4"/></svg>
<div class="badge" style="left:71px;top:497.50px;height:13px;line-height:13px;background:#7c7bad">用库存</div>
<svg class="cb" style="left:139px;top:491.30px" width="21" height="21" viewBox="0 0 21 21"><rect x="0.7" y="0.7" width="19.6" height="19.6" rx="2.9" fill="#f7f7f5" stroke="#cccccc" stroke-width="1.3"/></svg>
<svg class="cb" style="left:218px;top:491.30px" width="21" height="21" viewBox="0 0 21 21"><rect x="0.7" y="0.7" width="19.6" height="19.6" rx="2.9" fill="#f7f7f5" stroke="#cccccc" stroke-width="1.3"/></svg>
<div class="t" style="left:489px;top:495.64px">AA001</div>
<div class="t" style="left:549px;top:495.64px">20240726-0001</div>
<div class="t" style="left:648px;top:495.64px">J2300</div>
<div class="t" style="left:739px;top:495.64px">J2300<span class="c">（</span>XX<span class="c">机型）</span></div>
<div class="t" style="left:910px;top:495.64px">J2300</div>
<div class="t" style="left:977px;top:495.64px">J2301B</div>
<div class="t" style="left:1076px;top:495.64px"><span class="c">接线腔门</span></div>
<div class="t" style="left:1536px;top:495.64px">pcs</div>
<div class="t" style="left:1580px;top:495.64px"><span class="c">组焊件</span></div>
<div class="t" style="right:223.2px;top:495.64px">120</div>
<div class="t" style="right:178.2px;top:495.64px">0</div>
<div class="t" style="right:111.2px;top:495.64px">10</div>
<div class="t" style="right:20.2px;top:495.64px">0</div>
<div class="t bd" style="left:0;width:23px;text-align:center;top:522.14px;color:#1b933a;">15</div>
<svg class="cb" style="left:38px;top:517.80px" width="21" height="21" viewBox="0 0 21 21"><rect x="0.7" y="0.7" width="19.6" height="19.6" rx="2.9" fill="#fff" stroke="#4a4a4a" stroke-width="1.4"/></svg>
<div class="badge" style="left:71px;top:523.50px;height:14px;line-height:14px;background:#21a03f">领用完毕</div>
<svg class="cb" style="left:139px;top:517.80px" width="21" height="21" viewBox="0 0 21 21"><rect x="0.7" y="0.7" width="19.6" height="19.6" rx="2.9" fill="#f7f7f5" stroke="#cccccc" stroke-width="1.3"/></svg>
<svg class="cb" style="left:218px;top:517.80px" width="21" height="21" viewBox="0 0 21 21"><rect x="0.7" y="0.7" width="19.6" height="19.6" rx="2.9" fill="#bebddb" stroke="#444" stroke-width="1.4"/><path d="M6 10.5 L9.2 13.7 L15.2 7.2" stroke="#7c7bad" stroke-width="2.6" fill="none"/></svg>
<div class="t g" style="left:489px;top:522.14px">AA001</div>
<div class="t g" style="left:549px;top:522.14px">20240628-0001</div>
<div class="t g" style="left:648px;top:522.14px">J2300</div>
<div class="t g" style="left:739px;top:522.14px">J2300<span class="c">（</span>XX<span class="c">机型）</span></div>
<div class="t g" style="left:910px;top:522.14px">J2300</div>
<div class="t g" style="left:977px;top:522.14px">J2300-6B</div>
<div class="t g" style="left:1076px;top:522.14px"><span class="c">安装板</span>2</div>
<div class="t g" style="left:1201px;top:522.14px">δ5×190×120</div>
<div class="t g" style="left:1369px;top:522.14px">Q235<span class="c">钢板</span></div>
<div class="t g" style="left:1536px;top:522.14px">pcs</div>
<div class="t g" style="left:1580px;top:522.14px"><span class="c">半成品</span></div>
<div class="t g" style="right:223.2px;top:522.14px">126</div>
<div class="t g" style="right:178.2px;top:522.14px">5</div>
<div class="t g" style="right:111.2px;top:522.14px">10</div>
<div class="t g" style="right:20.2px;top:522.14px">0</div>
<div class="t bd" style="left:0;width:23px;text-align:center;top:548.14px;color:#1b933a;">16</div>
<svg class="cb" style="left:38px;top:543.80px" width="21" height="21" viewBox="0 0 21 21"><rect x="0.7" y="0.7" width="19.6" height="19.6" rx="2.9" fill="#fff" stroke="#4a4a4a" stroke-width="1.4"/></svg>
<div class="badge" style="left:71px;top:549.50px;height:14px;line-height:14px;background:#21a03f">领用完毕</div>
<svg class="cb" style="left:139px;top:543.80px" width="21" height="21" viewBox="0 0 21 21"><rect x="0.7" y="0.7" width="19.6" height="19.6" rx="2.9" fill="#f7f7f5" stroke="#cccccc" stroke-width="1.3"/></svg>
<svg class="cb" style="left:218px;top:543.80px" width="21" height="21" viewBox="0 0 21 21"><rect x="0.7" y="0.7" width="19.6" height="19.6" rx="2.9" fill="#bebddb" stroke="#444" stroke-width="1.4"/><path d="M6 10.5 L9.2 13.7 L15.2 7.2" stroke="#7c7bad" stroke-width="2.6" fill="none"/></svg>
<div class="t g" style="left:489px;top:548.14px">AA001</div>
<div class="t g" style="left:549px;top:548.14px">20240628-0001</div>
<div class="t g" style="left:648px;top:548.14px">J2300</div>
<div class="t g" style="left:739px;top:548.14px">J2300<span class="c">（</span>XX<span class="c">机型）</span></div>
<div class="t g" style="left:910px;top:548.14px">J2300</div>
<div class="t g" style="left:977px;top:548.14px">J2300-5B</div>
<div class="t g" style="left:1076px;top:548.14px"><span class="c">安装板</span>1</div>
<div class="t g" style="left:1201px;top:548.14px">δ5×290×200</div>
<div class="t g" style="left:1369px;top:548.14px">Q235<span class="c">钢板</span></div>
<div class="t g" style="left:1536px;top:548.14px">pcs</div>
<div class="t g" style="left:1580px;top:548.14px"><span class="c">半成品</span></div>
<div class="t g" style="right:223.2px;top:548.14px">126</div>
<div class="t g" style="right:178.2px;top:548.14px">0</div>
<div class="t g" style="right:111.2px;top:548.14px">10</div>
<div class="t g" style="right:20.2px;top:548.14px">0</div>
<div class="t bd" style="left:0;width:23px;text-align:center;top:574.64px;">17</div>
<svg class="cb" style="left:38px;top:570.30px" width="21" height="21" viewBox="0 0 21 21"><rect x="0.7" y="0.7" width="19.6" height="19.6" rx="2.9" fill="#fff" stroke="#4a4a4a" stroke-width="1.4"/></svg>
<div class="badge" style="left:71px;top:576.50px;height:13px;line-height:13px;background:#7c7bad">用库存</div>
<svg class="cb" style="left:139px;top:570.30px" width="21" height="21" viewBox="0 0 21 21"><rect x="0.7" y="0.7" width="19.6" height="19.6" rx="2.9" fill="#f7f7f5" stroke="#cccccc" stroke-width="1.3"/></svg>
<svg class="cb" style="left:218px;top:570.30px" width="21" height="21" viewBox="0 0 21 21"><rect x="0.7" y="0.7" width="19.6" height="19.6" rx="2.9" fill="#f7f7f5" stroke="#cccccc" stroke-width="1.3"/></svg>
<div class="t" style="left:489px;top:574.64px">AA001</div>
<div class="t" style="left:549px;top:574.64px">20240628-0003</div>
<div class="t" style="left:648px;top:574.64px">KX-JL3</div>
<div class="t" style="left:739px;top:574.64px"><span class="c">铰链</span></div>
<div class="t" style="left:977px;top:574.64px">KX-JL3-2</div>
<div class="t" style="left:1076px;top:574.64px"><span class="c">铰链座</span></div>
<div class="t" style="left:1201px;top:574.64px">25×50-L=36</div>
<div class="t" style="left:1369px;top:574.64px">Q235<span class="c">扁钢</span></div>
<div class="t" style="left:1536px;top:574.64px">pcs</div>
<div class="t" style="left:1580px;top:574.64px"><span class="c">半成品</span></div>
<div class="t" style="right:223.2px;top:574.64px">220</div>
<div class="t" style="right:178.2px;top:574.64px">5</div>
<div class="t" style="right:111.2px;top:574.64px">10</div>
<div class="t" style="right:20.2px;top:574.64px">0</div>
<div class="t bd" style="left:0;width:23px;text-align:center;top:601.14px;color:#1b933a;">18</div>
<svg class="cb" style="left:38px;top:596.80px" width="21" height="21" viewBox="0 0 21 21"><rect x="0.7" y="0.7" width="19.6" height="19.6" rx="2.9" fill="#fff" stroke="#4a4a4a" stroke-width="1.4"/></svg>
<div class="badge" style="left:71px;top:602.50px;height:14px;line-height:14px;background:#21a03f">领用完毕</div>
<svg class="cb" style="left:139px;top:596.80px" width="21" height="21" viewBox="0 0 21 21"><rect x="0.7" y="0.7" width="19.6" height="19.6" rx="2.9" fill="#f7f7f5" stroke="#cccccc" stroke-width="1.3"/></svg>
<svg class="cb" style="left:218px;top:596.80px" width="21" height="21" viewBox="0 0 21 21"><rect x="0.7" y="0.7" width="19.6" height="19.6" rx="2.9" fill="#bebddb" stroke="#444" stroke-width="1.4"/><path d="M6 10.5 L9.2 13.7 L15.2 7.2" stroke="#7c7bad" stroke-width="2.6" fill="none"/></svg>
<div class="t g" style="left:489px;top:601.14px">AA001</div>
<div class="t g" style="left:549px;top:601.14px">20240628-0001</div>
<div class="t g" style="left:648px;top:601.14px">J2300</div>
<div class="t g" style="left:739px;top:601.14px">J2300<span class="c">（</span>XX<span class="c">机型）</span></div>
<div class="t g" style="left:910px;top:601.14px">J2300</div>
<div class="t g" style="left:977px;top:601.14px">J2300-4B</div>
<div class="t g" style="left:1076px;top:601.14px"><span class="c">压盘</span></div>
<div class="t g" style="left:1201px;top:601.14px">δ30×151×115</div>
<div class="t g" style="left:1369px;top:601.14px">Q235<span class="c">钢板</span></div>
<div class="t g" style="left:1536px;top:601.14px">pcs</div>
<div class="t g" style="left:1580px;top:601.14px"><span class="c">半成品</span></div>
<div class="t g" style="right:223.2px;top:601.14px">120</div>
<div class="t g" style="right:178.2px;top:601.14px">0</div>
<div class="t g" style="right:111.2px;top:601.14px">10</div>
<div class="t g" style="right:20.2px;top:601.14px">0</div>
<div class="t bd" style="left:0;width:23px;text-align:center;top:627.14px;">19</div>
<svg class="cb" style="left:38px;top:622.80px" width="21" height="21" viewBox="0 0 21 21"><rect x="0.7" y="0.7" width="19.6" height="19.6" rx="2.9" fill="#fff" stroke="#4a4a4a" stroke-width="1.4"/></svg>
<div class="badge" style="left:71px;top:629.00px;height:13px;line-height:13px;background:#7c7bad">用库存</div>
<svg class="cb" style="left:139px;top:622.80px" width="21" height="21" viewBox="0 0 21 21"><rect x="0.7" y="0.7" width="19.6" height="19.6" rx="2.9" fill="#f7f7f5" stroke="#cccccc" stroke-width="1.3"/></svg>
<svg class="cb" style="left:218px;top:622.80px" width="21" height="21" viewBox="0 0 21 21"><rect x="0.7" y="0.7" width="19.6" height="19.6" rx="2.9" fill="#f7f7f5" stroke="#cccccc" stroke-width="1.3"/></svg>
<div class="t" style="left:489px;top:627.14px">AA001</div>
<div class="t" style="left:549px;top:627.14px">20240726-0001</div>
<div class="t" style="left:648px;top:627.14px">J2300</div>
<div class="t" style="left:739px;top:627.14px">J2300<span class="c">（</span>XX<span class="c">机型）</span></div>
<div class="t" style="left:910px;top:627.14px">J2300</div>
<div class="t" style="left:977px;top:627.14px">J2300B(JJJ)-1B</div>
<div class="t" style="left:1076px;top:627.14px"><span class="c">箱体安装座</span></div>
<div class="t" style="left:1201px;top:627.14px">δ10×280×53</div>
<div class="t" style="left:1369px;top:627.14px">Q235<span class="c">钢板</span></div>
<div class="t" style="left:1536px;top:627.14px">pcs</div>
<div class="t" style="left:1580px;top:627.14px"><span class="c">半成品</span></div>
<div class="t" style="right:223.2px;top:627.14px">150</div>
<div class="t" style="right:178.2px;top:627.14px">0</div>
<div class="t" style="right:111.2px;top:627.14px">10</div>
<div class="t" style="right:20.2px;top:627.14px">0</div>
<div class="t bd" style="left:0;width:23px;text-align:center;top:652.84px;color:#1b933a;">20</div>
<svg class="cb" style="left:38px;top:648.50px" width="21" height="21" viewBox="0 0 21 21"><rect x="0.7" y="0.7" width="19.6" height="19.6" rx="2.9" fill="#fff" stroke="#4a4a4a" stroke-width="1.4"/></svg>
<div class="badge" style="left:71px;top:654.40px;height:14px;line-height:14px;background:#21a03f">领用完毕</div>
<svg class="cb" style="left:139px;top:648.50px" width="21" height="21" viewBox="0 0 21 21"><rect x="0.7" y="0.7" width="19.6" height="19.6" rx="2.9" fill="#f7f7f5" stroke="#cccccc" stroke-width="1.3"/></svg>
<svg class="cb" style="left:218px;top:648.50px" width="21" height="21" viewBox="0 0 21 21"><rect x="0.7" y="0.7" width="19.6" height="19.6" rx="2.9" fill="#bebddb" stroke="#444" stroke-width="1.4"/><path d="M6 10.5 L9.2 13.7 L15.2 7.2" stroke="#7c7bad" stroke-width="2.6" fill="none"/></svg>
<div class="t g" style="left:340.5px;top:652.84px"><span class="c">采购</span> <span class="c">等待审批</span></div>
<div class="btnv" style="left:423px;top:651.00px">查看工单</div>
<div class="t g" style="left:489px;top:652.84px">AA001</div>
<div class="t g" style="left:549px;top:652.84px">20240628-0001</div>
<div class="t g" style="left:648px;top:652.84px">J2300</div>
<div class="t g" style="left:739px;top:652.84px">J2300<span class="c">（</span>XX<span class="c">机型）</span></div>
<div class="t g" style="left:910px;top:652.84px">J2300</div>
<div class="t g" style="left:977px;top:652.84px">A1-L</div>
<div class="t g" style="left:1076px;top:652.84px">A1<span class="c">联通节</span></div>
<div class="t g" style="left:1369px;top:652.84px">Q235</div>
<div class="t g" style="left:1536px;top:652.84px">pcs</div>
<div class="t g" style="left:1580px;top:652.84px"><span class="c">外购件</span></div>
<div class="t g" style="right:223.2px;top:652.84px">460</div>
<div class="t g" style="right:178.2px;top:652.84px">18,374</div>
<div class="t g" style="right:111.2px;top:652.84px">180</div>
<div class="t g" style="right:20.2px;top:652.84px">180</div>
<div class="t bd" style="left:0;width:23px;text-align:center;top:681.14px;color:#1b933a;">21</div>
<svg class="cb" style="left:38px;top:676.80px" width="21" height="21" viewBox="0 0 21 21"><rect x="0.7" y="0.7" width="19.6" height="19.6" rx="2.9" fill="#fff" stroke="#4a4a4a" stroke-width="1.4"/></svg>
<div class="badge" style="left:71px;top:682.50px;height:14px;line-height:14px;background:#21a03f">领用完毕</div>
<svg class="cb" style="left:139px;top:676.80px" width="21" height="21" viewBox="0 0 21 21"><rect x="0.7" y="0.7" width="19.6" height="19.6" rx="2.9" fill="#f7f7f5" stroke="#cccccc" stroke-width="1.3"/></svg>
<svg class="cb" style="left:218px;top:676.80px" width="21" height="21" viewBox="0 0 21 21"><rect x="0.7" y="0.7" width="19.6" height="19.6" rx="2.9" fill="#bebddb" stroke="#444" stroke-width="1.4"/><path d="M6 10.5 L9.2 13.7 L15.2 7.2" stroke="#7c7bad" stroke-width="2.6" fill="none"/></svg>
<div class="t g" style="left:489px;top:681.14px">AA001</div>
<div class="t g" style="left:549px;top:681.14px">20240628-0001</div>
<div class="t g" style="left:648px;top:681.14px">J2300</div>
<div class="t g" style="left:739px;top:681.14px">J2300<span class="c">（</span>XX<span class="c">机型）</span></div>
<div class="t g" style="left:910px;top:681.14px">J2300</div>
<div class="t g" style="left:977px;top:681.14px">J230302B</div>
<div class="t g" style="left:1076px;top:681.14px"><span class="c">上板组件</span></div>
<div class="t g" style="left:1536px;top:681.14px">pcs</div>
<div class="t g" style="left:1580px;top:681.14px"><span class="c">组焊件</span></div>
<div class="t g" style="right:223.2px;top:681.14px">120</div>
<div class="t g" style="right:178.2px;top:681.14px">0</div>
<div class="t g" style="right:111.2px;top:681.14px">10</div>
<div class="t g" style="right:20.2px;top:681.14px">0</div>
<div class="t bd" style="left:0;width:23px;text-align:center;top:707.14px;color:#1b933a;">22</div>
<svg class="cb" style="left:38px;top:702.80px" width="21" height="21" viewBox="0 0 21 21"><rect x="0.7" y="0.7" width="19.6" height="19.6" rx="2.9" fill="#fff" stroke="#4a4a4a" stroke-width="1.4"/></svg>
<div class="badge" style="left:71px;top:708.50px;height:14px;line-height:14px;background:#21a03f">领用完毕</div>
<svg class="cb" style="left:139px;top:702.80px" width="21" height="21" viewBox="0 0 21 21"><rect x="0.7" y="0.7" width="19.6" height="19.6" rx="2.9" fill="#f7f7f5" stroke="#cccccc" stroke-width="1.3"/></svg>
<svg class="cb" style="left:218px;top:702.80px" width="21" height="21" viewBox="0 0 21 21"><rect x="0.7" y="0.7" width="19.6" height="19.6" rx="2.9" fill="#bebddb" stroke="#444" stroke-width="1.4"/><path d="M6 10.5 L9.2 13.7 L15.2 7.2" stroke="#7c7bad" stroke-width="2.6" fill="none"/></svg>
<div class="t g" style="left:489px;top:707.14px">AA001</div>
<div class="t g" style="left:549px;top:707.14px">20240628-0001</div>
<div class="t g" style="left:648px;top:707.14px">J2300</div>
<div class="t g" style="left:739px;top:707.14px">J2300<span class="c">（</span>XX<span class="c">机型）</span></div>
<div class="t g" style="left:910px;top:707.14px">J2300</div>
<div class="t g" style="left:977px;top:707.14px">J2300B(JJJ)-1B</div>
<div class="t g" style="left:1076px;top:707.14px"><span class="c">箱体安装座</span></div>
<div class="t g" style="left:1201px;top:707.14px">δ10×280×53</div>
<div class="t g" style="left:1369px;top:707.14px">Q235<span class="c">钢板</span></div>
<div class="t g" style="left:1536px;top:707.14px">pcs</div>
<div class="t g" style="left:1580px;top:707.14px"><span class="c">半成品</span></div>
<div class="t g" style="right:223.2px;top:707.14px">150</div>
<div class="t g" style="right:178.2px;top:707.14px">0</div>
<div class="t g" style="right:111.2px;top:707.14px">10</div>
<div class="t g" style="right:20.2px;top:707.14px">0</div>
<div class="t bd" style="left:0;width:23px;text-align:center;top:733.64px;color:#1b933a;">23</div>
<svg class="cb" style="left:38px;top:729.30px" width="21" height="21" viewBox="0 0 21 21"><rect x="0.7" y="0.7" width="19.6" height="19.6" rx="2.9" fill="#fff" stroke="#4a4a4a" stroke-width="1.4"/></svg>
<div class="badge" style="left:71px;top:735.00px;height:14px;line-height:14px;background:#21a03f">领用完毕</div>
<svg class="cb" style="left:139px;top:729.30px" width="21" height="21" viewBox="0 0 21 21"><rect x="0.7" y="0.7" width="19.6" height="19.6" rx="2.9" fill="#f7f7f5" stroke="#cccccc" stroke-width="1.3"/></svg>
<svg class="cb" style="left:218px;top:729.30px" width="21" height="21" viewBox="0 0 21 21"><rect x="0.7" y="0.7" width="19.6" height="19.6" rx="2.9" fill="#bebddb" stroke="#444" stroke-width="1.4"/><path d="M6 10.5 L9.2 13.7 L15.2 7.2" stroke="#7c7bad" stroke-width="2.6" fill="none"/></svg>
<div class="t g" style="left:489px;top:733.64px">AA001</div>
<div class="t g" style="left:549px;top:733.64px">20240628-0001</div>
<div class="t g" style="left:648px;top:733.64px">J2300</div>
<div class="t g" style="left:739px;top:733.64px">J2300<span class="c">（</span>XX<span class="c">机型）</span></div>
<div class="t g" style="left:910px;top:733.64px">J2300</div>
<div class="t g" style="left:977px;top:733.64px">J230305-2B</div>
<div class="t g" style="left:1076px;top:733.64px"><span class="c">电磁阀箱安装座垫块</span></div>
<div class="t g" style="left:1201px;top:733.64px">φ40-L=24</div>
<div class="t g" style="left:1369px;top:733.64px">Q235<span class="c">棒钢</span></div>
<div class="t g" style="left:1536px;top:733.64px">pcs</div>
<div class="t g" style="left:1580px;top:733.64px"><span class="c">半成品</span></div>
<div class="t g" style="right:223.2px;top:733.64px">210</div>
<div class="t g" style="right:178.2px;top:733.64px">0</div>
<div class="t g" style="right:111.2px;top:733.64px">10</div>
<div class="t g" style="right:20.2px;top:733.64px">0</div>
<div class="t bd" style="left:0;width:23px;text-align:center;top:760.64px;">24</div>
<svg class="cb" style="left:38px;top:756.30px" width="21" height="21" viewBox="0 0 21 21"><rect x="0.7" y="0.7" width="19.6" height="19.6" rx="2.9" fill="#fff" stroke="#4a4a4a" stroke-width="1.4"/></svg>
<div class="badge" style="left:71px;top:762.50px;height:13px;line-height:13px;background:#7c7bad">用库存</div>
<svg class="cb" style="left:139px;top:756.30px" width="21" height="21" viewBox="0 0 21 21"><rect x="0.7" y="0.7" width="19.6" height="19.6" rx="2.9" fill="#f7f7f5" stroke="#cccccc" stroke-width="1.3"/></svg>
<svg class="cb" style="left:218px;top:756.30px" width="21" height="21" viewBox="0 0 21 21"><rect x="0.7" y="0.7" width="19.6" height="19.6" rx="2.9" fill="#f7f7f5" stroke="#cccccc" stroke-width="1.3"/></svg>
<div class="t" style="left:489px;top:760.64px">AA001</div>
<div class="t" style="left:549px;top:760.64px">20240726-0001</div>
<div class="t" style="left:648px;top:760.64px">J2300</div>
<div class="t" style="left:739px;top:760.64px">J2300<span class="c">（</span>XX<span class="c">机型）</span></div>
<div class="t" style="left:910px;top:760.64px">J2300</div>
<div class="t" style="left:977px;top:760.64px">J2300-2B</div>
<div class="t" style="left:1076px;top:760.64px"><span class="c">铜垫</span></div>
<div class="t" style="left:1201px;top:760.64px">δ3</div>
<div class="t" style="left:1369px;top:760.64px"><span class="c">紫铜</span></div>
<div class="t" style="left:1536px;top:760.64px">pcs</div>
<div class="t" style="left:1580px;top:760.64px"><span class="c">半成品</span></div>
<div class="t" style="right:223.2px;top:760.64px">120</div>
<div class="t" style="right:178.2px;top:760.64px">1,516</div>
<div class="t" style="right:111.2px;top:760.64px">10</div>
<div class="t" style="right:20.2px;top:760.64px">0</div>
<div class="t bd" style="left:0;width:23px;text-align:center;top:787.14px;">25</div>
<svg class="cb" style="left:38px;top:782.80px" width="21" height="21" viewBox="0 0 21 21"><rect x="0.7" y="0.7" width="19.6" height="19.6" rx="2.9" fill="#fff" stroke="#4a4a4a" stroke-width="1.4"/></svg>
<div class="badge" style="left:71px;top:789.00px;height:13px;line-height:13px;background:#7c7bad">用库存</div>
<svg class="cb" style="left:139px;top:782.80px" width="21" height="21" viewBox="0 0 21 21"><rect x="0.7" y="0.7" width="19.6" height="19.6" rx="2.9" fill="#f7f7f5" stroke="#cccccc" stroke-width="1.3"/></svg>
<svg class="cb" style="left:218px;top:782.80px" width="21" height="21" viewBox="0 0 21 21"><rect x="0.7" y="0.7" width="19.6" height="19.6" rx="2.9" fill="#f7f7f5" stroke="#cccccc" stroke-width="1.3"/></svg>
<div class="t" style="left:489px;top:787.14px">AA001</div>
<div class="t" style="left:549px;top:787.14px">20240726-0001</div>
<div class="t" style="left:648px;top:787.14px">J2300</div>
<div class="t" style="left:739px;top:787.14px">J2300<span class="c">（</span>XX<span class="c">机型）</span></div>
<div class="t" style="left:910px;top:787.14px">J2300</div>
<div class="t" style="left:977px;top:787.14px">J230303B</div>
<div class="t" style="left:1076px;top:787.14px"><span class="c">隔板组件</span></div>
<div class="t" style="left:1536px;top:787.14px">pcs</div>
<div class="t" style="left:1580px;top:787.14px"><span class="c">组焊件</span></div>
<div class="t" style="right:223.2px;top:787.14px">120</div>
<div class="t" style="right:178.2px;top:787.14px">0</div>
<div class="t" style="right:111.2px;top:787.14px">10</div>
<div class="t" style="right:20.2px;top:787.14px">0</div>
<svg class="a" style="left:10px;top:6px" width="13" height="10" viewBox="0 0 13 10"><rect x="0" y="0.5" width="5.6" height="4" fill="#fff"/><rect x="6.6" y="0.5" width="5.6" height="4" fill="#fff"/><rect x="0" y="5.5" width="5.6" height="4" fill="#fff"/><rect x="6.6" y="5.5" width="5.6" height="4" fill="#fff"/></svg>
<div class="a" style="left:51px;top:-1px;font-size:19.7px;line-height:24px;color:#fff;white-space:nowrap">MES<span style="letter-spacing:-0.3px">排单管理</span></div>
<div class="a" style="left:224.5px;top:4px;font-size:11.7px;line-height:14px;color:#fff;white-space:nowrap">BOM需求排单</div>
<div class="a" style="left:315px;top:4px;font-size:11.7px;line-height:14px;color:#fff;white-space:nowrap">从订单排单</div>
<div class="a" style="left:392px;top:4px;font-size:11.7px;line-height:14px;color:#fff;white-space:nowrap">备货排单</div>
<svg class="a" style="left:1688px;top:5px" width="16" height="13" viewBox="0 0 16 13"><ellipse cx="5.5" cy="5" rx="5.3" ry="3.8" fill="#fff"/><path d="M2 7.5 L1 10.5 L5 8.5Z" fill="#fff"/><ellipse cx="9.5" cy="7.8" rx="5.3" ry="3.8" fill="#fff" stroke="#7b7aac" stroke-width="0.8"/><path d="M12 10.5 L14.5 12.5 L11 11Z" fill="#fff"/></svg>
<div class="a" style="left:1699px;top:2.5px;width:15.5px;height:13.5px;border-radius:7px;background:#00a09d;color:#fff;font-size:9px;font-weight:bold;line-height:13.5px;text-align:center">3</div>
<svg class="a" style="left:1727px;top:5px" width="14" height="13" viewBox="0 0 14 13"><circle cx="6.5" cy="6.5" r="5.2" fill="none" stroke="#c3c2dd" stroke-width="2"/><path d="M7.2 3.5 V6.8 H4.8" stroke="#c3c2dd" stroke-width="1.4" fill="none"/></svg>
<svg class="a" style="left:1757px;top:6px" width="12" height="11" viewBox="0 0 12 11"><g fill="none" stroke="#fff" stroke-width="1.5"><rect x="0.8" y="0.8" width="4" height="3.8"/><rect x="6.8" y="0.8" width="4" height="3.8"/><rect x="0.8" y="6.2" width="4" height="3.8"/></g><g fill="#fff"><rect x="2.2" y="2.1" width="1.2" height="1.2"/><rect x="8.2" y="2.1" width="1.2" height="1.2"/><rect x="2.2" y="7.5" width="1.2" height="1.2"/><rect x="6" y="5.6" width="1.8" height="4.8"/><rect x="7.8" y="7.2" width="3.4" height="1.5"/><rect x="9" y="9.2" width="2.2" height="1.2"/></g></svg>
<svg class="a" style="left:1790.5px;top:0px" width="24" height="24" viewBox="0 0 24 24"><defs><clipPath id="av"><circle cx="12" cy="11.5" r="11.5"/></clipPath></defs><g clip-path="url(#av)"><rect width="24" height="24" fill="#8a7448"/><rect x="0" y="3" width="6" height="3" fill="#a58c5a"/><rect x="17" y="8" width="7" height="3" fill="#a38a58"/><rect x="0" y="13" width="6" height="3" fill="#6d5a3a"/><ellipse cx="12.5" cy="11" rx="6" ry="7.5" fill="#d6ae92"/><path d="M6 7 Q12 0 19 6 L18.5 8 Q12 4 6.5 8.5z" fill="#3a2e26"/><rect x="7.5" y="8.5" width="10" height="2" fill="#4a3d35" opacity="0.7"/><path d="M3 24 Q12 16 21 24z" fill="#7e8a86"/></g></svg>
<div class="a" style="left:1817px;top:4px;font-size:11.7px;line-height:14px;color:#fff;white-space:nowrap;-webkit-text-stroke:0.3px #fff">Mitchell Admin</div>
<div class="a" style="left:10px;top:44.5px;font-size:16px;line-height:20px;color:#666;white-space:nowrap">BOM需求</div>
<div class="a" style="left:9px;top:73px;width:29px;height:28px;border-radius:3px;background:#7c7bad"></div>
<svg class="a" style="left:17px;top:78px" width="14" height="15" viewBox="0 0 14 15"><path d="M1 3.5 h12 v11 h-12z" fill="#fff"/><rect x="3" y="1" width="2" height="3.5" rx="1" fill="#fff"/><rect x="9" y="1" width="2" height="3.5" rx="1" fill="#fff"/><g fill="#8f8ebb"><rect x="2.5" y="6" width="1.8" height="1.6"/><rect x="5.2" y="6" width="1.8" height="1.6"/><rect x="7.9" y="6" width="1.8" height="1.6"/><rect x="10.5" y="6" width="1.8" height="1.6"/><rect x="2.5" y="8.6" width="1.8" height="1.6"/><rect x="5.2" y="8.6" width="1.8" height="1.6"/><rect x="7.9" y="8.6" width="1.8" height="1.6"/><rect x="10.5" y="8.6" width="1.8" height="1.6"/><rect x="2.5" y="11.2" width="1.8" height="1.6"/><rect x="5.2" y="11.2" width="1.8" height="1.6"/><rect x="7.9" y="11.2" width="1.8" height="1.6"/><rect x="10.5" y="11.2" width="1.8" height="1.6"/></g></svg>
<div class="obtn" style="left:42px;top:73px;width:25px;height:28px"></div>
<svg class="a" style="left:49px;top:79px" width="10" height="14" viewBox="0 0 10 14"><circle cx="4.3" cy="3.7" r="3.5" fill="#222"/><rect x="3.5" y="6" width="1.6" height="7" fill="#222"/></svg>
<div class="obtn" style="left:70px;top:73px;width:29px;height:28px"></div>
<svg class="a" style="left:78px;top:79px" width="13" height="12" viewBox="0 0 13 12"><path d="M5 0.5 h2.6 v4 h2.4 l-3.7 3.8 l-3.7 -3.8 h2.4z" fill="#222"/><path d="M0.5 6.8 h3.5 l2.3 2.3 l2.3 -2.3 h3.8 v4.4 h-11.9z" fill="#222"/></svg>
<div class="a" style="left:1139px;top:41px;width:754px;height:27px;border:1px solid #ccc;border-radius:3px;background:#fff"></div>
<div class="a" style="left:1145px;top:49px;width:1.2px;height:13px;background:#222"></div>
<div class="a" style="left:1145.5px;top:48px;font-size:11.7px;line-height:14px;color:#999;white-space:nowrap">搜索...</div>
<svg class="a" style="left:1876px;top:48px" width="13" height="12" viewBox="0 0 13 12"><circle cx="5" cy="4.8" r="3.9" fill="none" stroke="#333" stroke-width="1.7"/><path d="M7.8 7.6 L11 10.8" stroke="#333" stroke-width="2.2" stroke-linecap="round"/></svg>
<div class="obtn" style="left:1139.5px;top:73px;width:58px;height:28px"></div>
<div class="obtn" style="left:1209px;top:73px;width:58px;height:28px"></div>
<div class="obtn" style="left:1280px;top:73px;width:59px;height:28px"></div>
<svg class="a" style="left:1148px;top:81px" width="10" height="11" viewBox="0 0 10 11"><path d="M0.5 0.5 h9 l-3.6 4.2 v5.8 l-1.8 -1.2 v-4.6z" fill="#222"/></svg>
<div class="a" style="left:1161px;top:79px;font-size:11.7px;line-height:14px;color:#444;white-space:nowrap">筛选</div>
<svg class="a" style="left:1218px;top:81px" width="11" height="10" viewBox="0 0 11 10"><rect x="0" y="0.5" width="10" height="1.8" fill="#222"/><rect x="0" y="4" width="10" height="1.8" fill="#222"/><rect x="0" y="7.5" width="10" height="1.8" fill="#222"/></svg>
<div class="a" style="left:1231px;top:79px;font-size:11.7px;line-height:14px;color:#444;white-space:nowrap">分组</div>
<svg class="a" style="left:1288px;top:80px" width="12" height="12" viewBox="0 0 12 12"><path d="M6 0.3 L7.6 4 L11.6 4.3 L8.5 6.9 L9.5 10.9 L6 8.8 L2.5 10.9 L3.5 6.9 L0.4 4.3 L4.4 4z" fill="#222"/></svg>
<div class="a" style="left:1302px;top:79px;font-size:11.7px;line-height:14px;color:#444;white-space:nowrap">收藏</div>
<div class="a" style="left:1625px;top:79px;font-size:11.7px;line-height:14px;color:#555;white-space:nowrap">1-80 / 176</div>
<div class="obtn" style="left:1682.5px;top:73px;width:51px;height:28px"></div>
<div class="a" style="left:1707px;top:74px;width:1px;height:26px;background:#dee2e6"></div>
<svg class="a" style="left:1691px;top:80px" width="10" height="12" viewBox="0 0 10 12"><path d="M7.5 1.2 L3 6 L7.5 10.8" stroke="#222" stroke-width="2.4" fill="none"/></svg>
<svg class="a" style="left:1715px;top:80px" width="10" height="12" viewBox="0 0 10 12"><path d="M2.5 1.2 L7 6 L2.5 10.8" stroke="#222" stroke-width="2.4" fill="none"/></svg>
<svg class="a" style="left:1741px;top:80px" width="13" height="12" viewBox="0 0 13 12"><path d="M10.6 4.4 A4.6 4.6 0 0 0 2.2 4.2" stroke="#333" stroke-width="1.8" fill="none"/><path d="M11.8 1 v4.3 h-4.3z" fill="#333"/><path d="M1.9 7.4 A4.6 4.6 0 0 0 10.4 7.6" stroke="#333" stroke-width="1.8" fill="none"/><path d="M0.8 11 v-4.3 h4.3z" fill="#333"/></svg>
<div class="obtn" style="left:1776px;top:73px;width:117px;height:27px;overflow:hidden"><div class="a" style="left:0;top:0;width:29.5px;height:25px;background:#e6e6e6"></div></div>
<div class="a" style="left:1805.5px;top:74px;width:1px;height:25px;background:#dee2e6"></div>
<div class="a" style="left:1833px;top:74px;width:1px;height:25px;background:#dee2e6"></div>
<div class="a" style="left:1863.5px;top:74px;width:1px;height:25px;background:#dee2e6"></div>
<svg class="a" style="left:1784px;top:80px" width="14" height="12" viewBox="0 0 14 12"><g fill="#222"><circle cx="1.6" cy="1.8" r="1"/><rect x="3.4" y="1" width="9.3" height="1.7"/><circle cx="1.6" cy="5.8" r="1"/><rect x="3.4" y="5" width="9.3" height="1.7"/><circle cx="1.6" cy="9.8" r="1"/><rect x="3.4" y="9" width="9.3" height="1.7"/></g></svg>
<svg class="a" style="left:1813px;top:79px" width="13" height="14" viewBox="0 0 13 14"><path d="M1.3 2.6 h10.2 v10 h-10.2z" fill="#fff" stroke="#222" stroke-width="1.1"/><rect x="0.9" y="2.2" width="11" height="2.4" fill="#222"/><path d="M3.2 2.5 a1 1.2 0 0 1 2 0 M7.6 2.5 a1 1.2 0 0 1 2 0" stroke="#222" stroke-width="1.1" fill="none"/><path d="M1.3 7.2 h10.2 M1.3 9.9 h10.2 M4.6 4.5 v8.2 M8.2 4.5 v8.2" stroke="#222" stroke-width="0.7"/></svg>
<svg class="a" style="left:1841px;top:79px" width="15" height="13" viewBox="0 0 15 13"><path d="M1.5 0.5 v11.4 h13" stroke="#222" stroke-width="0.9" fill="none"/><g fill="#222"><rect x="3.2" y="6.7" width="1.3" height="4.4"/><rect x="5.9" y="2.5" width="1.3" height="8.6"/><rect x="8.6" y="4.5" width="1.3" height="6.6"/><rect x="11.2" y="1.5" width="1.3" height="9.6"/></g></svg>
<svg class="a" style="left:1872px;top:80px" width="13" height="11" viewBox="0 0 13 11"><path d="M0.9 0.9 h10.6 v9 h-10.6z" fill="#fff" stroke="#222" stroke-width="1.1"/><rect x="0.9" y="0.9" width="10.6" height="1.8" fill="#222"/><path d="M0.9 6.1 h10.6 M4.4 2.5 v7.4 M8 2.5 v7.4" stroke="#222" stroke-width="0.8"/></svg>
<div class="a" style="left:1891px;top:111px;width:15px;height:698px;background:#fdfdfd"></div>
<svg class="a" style="left:1894px;top:117px" width="11" height="10" viewBox="0 0 11 10"><path d="M5.5 1.5 L10 8.5 H1z" fill="#888" stroke="#888" stroke-width="1" stroke-linejoin="round"/></svg>
<div class="a" style="left:1895px;top:134px;width:9px;height:293px;border-radius:4.5px;background:#666"></div>
<div class="a" style="left:936px;top:372px;width:0;height:0"><div style="position:absolute;left:-600px;top:-150px;width:1200px;height:300px;font-size:260px;line-height:300px;letter-spacing:-39px;font-weight:normal;color:rgba(0,0,0,0.075);white-space:nowrap;transform:rotate(-19.8deg);transform-origin:50% 50%;text-align:center;text-indent:-39px">通商软件</div></div>
<div class="a" style="left:1412px;top:696px;font-size:53px;line-height:70px;color:rgba(90,90,90,0.52);white-space:nowrap">服务号<span style="display:inline-block;width:64px;text-align:center;position:relative;top:-3px;font-size:42px">•</span>通商软件</div>
<svg class="a" style="left:1320px;top:695px;opacity:0.5" width="90" height="70" viewBox="0 0 90 70"><defs><mask id="mk"><rect width="90" height="70" fill="#fff"/><ellipse cx="57.3" cy="46.5" rx="22.8" ry="20" fill="#000"/></mask></defs><g mask="url(#mk)"><ellipse cx="28.8" cy="28.3" rx="20.6" ry="20" fill="#606060"/><path d="M14 40 L16.5 53 L25 45z" fill="#606060"/></g><circle cx="25" cy="22" r="3" fill="#fff"/><circle cx="42.4" cy="22" r="3" fill="#fff"/><ellipse cx="57.3" cy="46.5" rx="21" ry="18.2" fill="#606060"/><path d="M66 60 L72 65 L58 63z" fill="#606060"/><circle cx="51" cy="38" r="2.8" fill="#fff"/><circle cx="65.7" cy="38" r="2.8" fill="#fff"/></svg>
</body></html>
